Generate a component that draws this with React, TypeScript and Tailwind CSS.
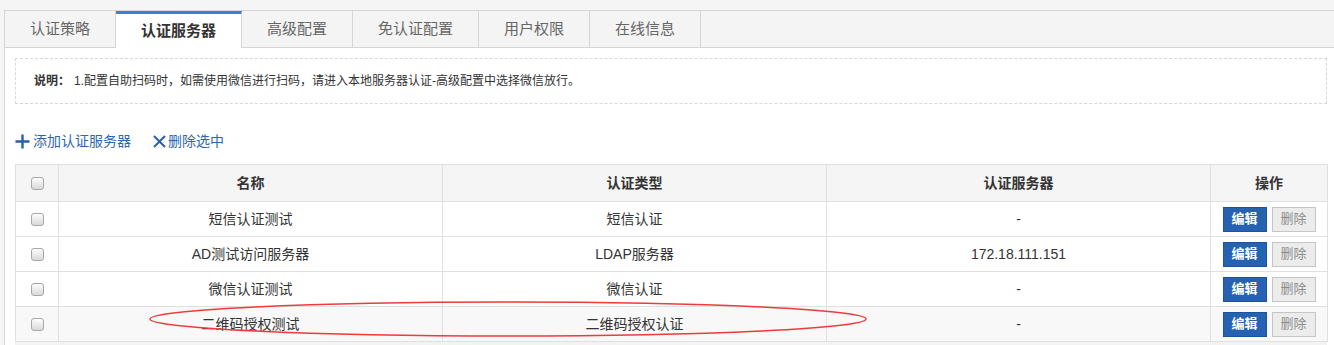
import React from "react";

const tabs = [
  { label: "认证策略", w: "w-[111px]" },
  { label: "认证服务器", w: "w-[126px]", active: true },
  { label: "高级配置", w: "w-[111px]" },
  { label: "免认证配置", w: "w-[126px]" },
  { label: "用户权限", w: "w-[111px]" },
  { label: "在线信息", w: "w-[111px]" },
];

const rows = [
  { name: "短信认证测试", type: "短信认证", server: "-" },
  { name: "AD测试访问服务器", type: "LDAP服务器", server: "172.18.111.151" },
  { name: "微信认证测试", type: "微信认证", server: "-" },
  { name: "二维码授权测试", type: "二维码授权认证", server: "-", shaded: true },
];

const Checkbox: React.FC = () => (
  <div className="mx-auto w-[13px] h-[13px] rounded-[3px] border border-[#a8a8a8] bg-gradient-to-b from-[#fdfdfd] to-[#d9d9d9]" />
);

const App: React.FC = () => {
  return (
    <div
      className="relative w-[1334px] h-[345px] overflow-hidden bg-[#f5f5f5] pt-[10px] pl-[4px] text-[#333]"
      style={{ fontFamily: '"Liberation Sans", Arial, "Noto Sans CJK SC", sans-serif' }}
    >
      <div className="h-full border-l border-t border-[#d6d6d6] bg-white">
        {/* Tab bar */}
        <div className="flex h-[37px] bg-[#f4f4f4] border-b border-[#d6d6d6]">
          {tabs.map((t) =>
            t.active ? (
              <div
                key={t.label}
                className={`${t.w} h-[37px] border-r border-[#d6d6d6] border-t-[3px] border-t-[#3b7fd6] bg-white flex items-center justify-center text-[15px] font-bold text-[#333]`}
              >
                {t.label}
              </div>
            ) : (
              <div
                key={t.label}
                className={`${t.w} h-[36px] border-r border-[#d6d6d6] flex items-center justify-center text-[15px] text-[#666]`}
              >
                {t.label}
              </div>
            )
          )}
        </div>

        <div className="pl-[10px] pr-[7px] pt-[10px]">
          {/* Notice */}
          <div className="h-[46px] border border-dashed border-[#d8d8d8] flex items-center pl-[18px] text-[12px] text-[#333]">
            <span className="font-bold">说明：</span>
            <span className="ml-[4px]">1.配置自助扫码时，如需使用微信进行扫码，请进入本地服务器认证-高级配置中选择微信放行。</span>
          </div>

          {/* Actions */}
          <div className="flex items-center h-[24px] mt-[25px] text-[14px] text-[#2f66b3]">
            <div className="flex items-center">
              <svg width="15" height="15" viewBox="0 0 15 15" className="mr-[3px]">
                <path d="M7.5 0.5v14M0.5 7.5h14" stroke="#2b5fab" strokeWidth="2.4" />
              </svg>
              <span>添加认证服务器</span>
            </div>
            <div className="flex items-center ml-[22px]">
              <svg width="13" height="13" viewBox="0 0 13 13" className="mr-[2px]">
                <path d="M1 1l11 11M12 1L1 12" stroke="#2b5fab" strokeWidth="2" />
              </svg>
              <span>删除选中</span>
            </div>
          </div>

          {/* Table */}
          <table className="mt-[11px] w-[1312px] table-fixed border-collapse text-[14px]">
            <colgroup>
              <col className="w-[43px]" />
              <col className="w-[384px]" />
              <col className="w-[384px]" />
              <col className="w-[384px]" />
              <col className="w-[117px]" />
            </colgroup>
            <thead>
              <tr className="bg-[#f5f5f5]">
                <th className="h-[37px] border border-[#e0e0e0]">
                  <Checkbox />
                </th>
                <th className="border border-[#e0e0e0] font-bold">名称</th>
                <th className="border border-[#e0e0e0] font-bold">认证类型</th>
                <th className="border border-[#e0e0e0] font-bold">认证服务器</th>
                <th className="border border-[#e0e0e0] font-bold">操作</th>
              </tr>
            </thead>
            <tbody>
              {rows.map((r) => (
                <tr key={r.name} className={r.shaded ? "bg-[#f8f8f8]" : "bg-white"}>
                  <td className="h-[35px] border border-[#e0e0e0]">
                    <Checkbox />
                  </td>
                  <td className="border border-[#e0e0e0] text-center">{r.name}</td>
                  <td className="border border-[#e0e0e0] text-center">{r.type}</td>
                  <td className="border border-[#e0e0e0] text-center">{r.server}</td>
                  <td className="border border-[#e0e0e0]">
                    <div className="flex justify-center gap-[5px]">
                      <button className="w-[44px] h-[25px] bg-[#2762b2] border border-[#1c5399] text-white text-[13px] font-bold">
                        编辑
                      </button>
                      <button className="w-[44px] h-[25px] bg-[#ececec] border border-[#c6c6c6] text-[#8c8c8c] text-[13px]">
                        删除
                      </button>
                    </div>
                  </td>
                </tr>
              ))}
            </tbody>
          </table>
          <div className="h-[10px] bg-[#f3f3f3]" />
        </div>
      </div>

      {/* Red annotation ellipse */}
      <svg
        className="absolute left-0 top-0 pointer-events-none"
        width="1334"
        height="345"
        viewBox="0 0 1334 345"
      >
        <ellipse cx="508" cy="319" rx="358" ry="17" fill="none" stroke="#ee3b3b" strokeWidth="1.5" />
      </svg>
    </div>
  );
};

export default App;
